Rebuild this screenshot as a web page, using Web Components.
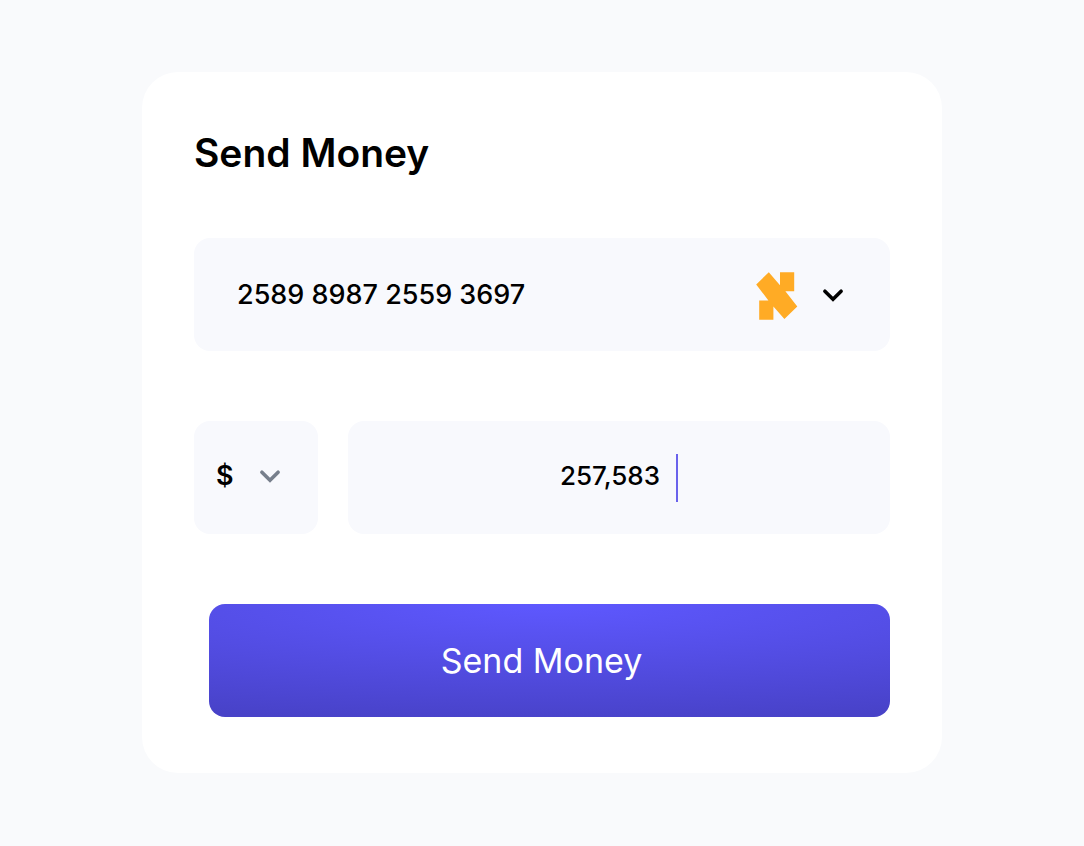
<!DOCTYPE html>
<html lang="en">
<head>
<meta charset="utf-8">
<meta name="viewport" content="width=device-width, initial-scale=1">
<title>Send Money</title>
<style>
  body { margin: 0; min-height: 100vh; background: #f9fafc; color: #000; font-family: Inter, "Liberation Sans", sans-serif; }
</style>
</head>
<body>
<send-money-card heading="Send Money">
  <account-picker></account-picker>
  <amount-row></amount-row>
  <primary-button>Send Money</primary-button>
</send-money-card>
<script>
  const define = (name, html, setup) => customElements.define(name, class extends HTMLElement {
    constructor() {
      super();
      this.attachShadow({ mode: 'open' }).innerHTML = html;
    }
    connectedCallback() { if (setup) setup(this, this.shadowRoot); }
  });

  define('chevron-icon', `
    <style>
      :host { display: block; width: 24px; height: 24px; pointer-events: none; }
      svg { display: block; }
    </style>
    <svg width="24" height="24" viewBox="0 0 24 24" fill="none" stroke="currentColor" stroke-width="3.6" stroke-linecap="round" stroke-linejoin="miter" aria-hidden="true"><path d="M3.9 8.2 12 16.3 20.1 8.2"/></svg>`);

  define('bank-logo', `
    <style>
      :host { display: block; pointer-events: none; }
      svg { display: block; }
    </style>
    <svg width="42" height="50" viewBox="0 -2 42 50" fill="#ffab25" aria-hidden="true"><path d="M0.2 12.5 12.8 0.2 24 13.2V0.2H38.2V19.2H29.4L41.3 34.6 28.4 47 17.4 34.4V47.8H3.2V28.4H12.4Z"/></svg>`);

  define('send-money-card', `
    <style>
      :host { display: block; padding: 72px 24px; }
      form { box-sizing: border-box; max-width: 800px; margin: 0 auto; padding: 56px 52px; background: #fff; border-radius: 36px; }
      h1 { margin: 0 0 60px; font-size: 39px; line-height: 50px; font-weight: 600; }
      .fields { display: grid; gap: 70px; }
    </style>
    <form>
      <h1></h1>
      <div class="fields"><slot></slot></div>
    </form>`, (host, root) => { root.querySelector('h1').textContent = host.getAttribute('heading'); });

  define('account-picker', `
    <style>
      :host { display: grid; align-items: center; background: #f8f9fd; border-radius: 16px; }
      select { grid-area: 1 / 1; width: 100%; height: 113px; padding: 0 136px 0 43px; border: 0; border-radius: 16px; background: none; color: inherit; appearance: none; font: 500 27px Inter, "Liberation Sans", sans-serif; }
      .icons { grid-area: 1 / 1; justify-self: end; display: flex; align-items: center; gap: 23px; margin-right: 45px; pointer-events: none; }
    </style>
    <select aria-label="Account"><option>2589 8987 2559 3697</option></select>
    <span class="icons"><bank-logo></bank-logo><chevron-icon></chevron-icon></span>`);

  define('currency-picker', `
    <style>
      :host { display: grid; align-items: center; background: #f8f9fd; border-radius: 16px; }
      select { grid-area: 1 / 1; width: 100%; height: 113px; padding: 0 60px 4px 22px; border: 0; border-radius: 16px; background: none; color: inherit; appearance: none; font: 600 27px Inter, "Liberation Sans", sans-serif; }
      chevron-icon { grid-area: 1 / 1; justify-self: end; margin: 0 36px 4px 0; color: #777f8c; }
    </style>
    <select aria-label="Currency"><option>$</option></select>
    <chevron-icon></chevron-icon>`);

  define('amount-field', `
    <style>
      :host { display: block; background: #f8f9fd; border-radius: 16px; }
      label { display: flex; align-items: center; justify-content: center; gap: 16px; height: 113px; }
      input { field-sizing: content; padding: 0 0 4px; border: 0; outline: 0; background: none; color: inherit; font: 500 26px Inter, "Liberation Sans", sans-serif; }
      .caret { width: 2px; height: 48px; background: #6a62ec; }
    </style>
    <label><input aria-label="Amount" inputmode="decimal" value="257,583"><span class="caret"></span></label>`);

  define('amount-row', `
    <style>
      :host { display: grid; grid-template-columns: 124px 1fr; gap: 30px; }
    </style>
    <currency-picker></currency-picker>
    <amount-field></amount-field>`);

  define('primary-button', `
    <style>
      :host { display: block; margin-left: 15px; }
      button { display: block; width: 100%; height: 113px; padding: 0 16px 0 0; border: 0; border-radius: 16px; color: #fff; font: 400 34px Inter, "Liberation Sans", sans-serif; background: radial-gradient(120% 105% at 50% 0, #5e58ff, #4842c8); cursor: pointer; }
    </style>
    <button type="button"><slot></slot></button>`);
</script>
</body>
</html>
